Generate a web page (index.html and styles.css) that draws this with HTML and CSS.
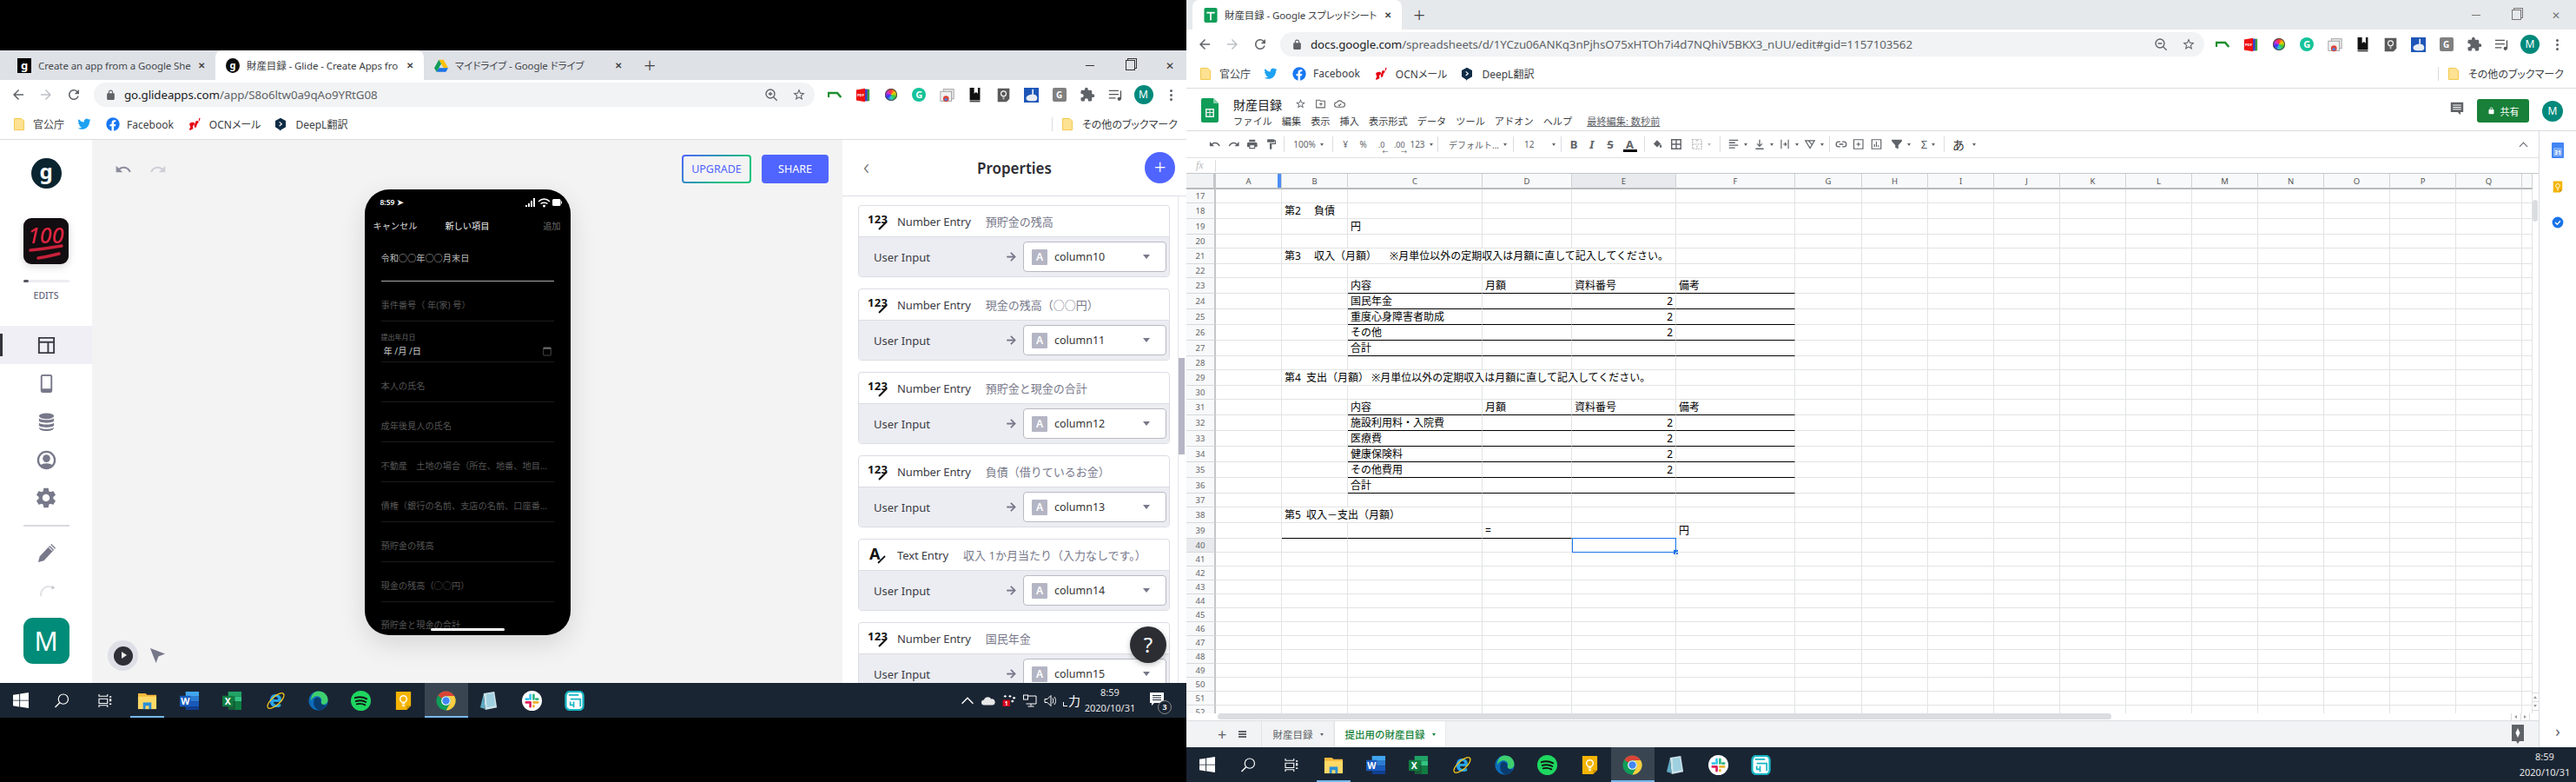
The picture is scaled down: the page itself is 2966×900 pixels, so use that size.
FILE: index.html
```html
<!DOCTYPE html>
<html lang="ja">
<head>
<meta charset="utf-8">
<title>Desktop</title>
<link rel="stylesheet" href="styles.css">
</head>
<body>
<svg class="defs" xmlns="http://www.w3.org/2000/svg">
  <symbol id="back" viewBox="0 0 24 24"><path d="M20 11H7.830l5.590-5.590L12 4l-8 8 8 8 1.410-1.410L7.830 13H20v-2z"/></symbol>
  <symbol id="reload" viewBox="0 0 24 24"><path d="M17.650 6.350A7.960 7.960 0 0 0 12 4c-4.420 0-7.990 3.580-7.990 8s3.570 8 7.990 8c3.730 0 6.840-2.550 7.730-6h-2.080A5.990 5.990 0 0 1 12 18c-3.310 0-6-2.690-6-6s2.690-6 6-6c1.660 0 3.140.69 4.220 1.780L13 11h7V4l-2.350 2.350z"/></symbol>
  <symbol id="lock" viewBox="0 0 24 24"><path d="M18 8h-1V6c0-2.760-2.240-5-5-5S7 3.240 7 6v2H6c-1.100 0-2 .9-2 2v10c0 1.100.9 2 2 2h12c1.100 0 2-.9 2-2V10c0-1.100-.9-2-2-2zM9 6c0-1.660 1.340-3 3-3s3 1.340 3 3v2H9V6z"/></symbol>
  <symbol id="star" viewBox="0 0 24 24"><path d="M22 9.240l-7.190-.62L12 2 9.190 8.630 2 9.240l5.460 4.730L5.820 21 12 17.270 18.180 21l-1.630-7.030L22 9.240zM12 15.400l-3.760 2.270 1-4.280-3.320-2.880 4.380-.38L12 6.100l1.710 4.040 4.380.38-3.320 2.880 1 4.280L12 15.400z"/></symbol>
  <symbol id="zoomi" viewBox="0 0 24 24"><circle cx="10.500" cy="10.500" r="7.500" fill="none" stroke="currentColor" stroke-width="2"/><path d="M16 16l6 6M7 10.500h7" stroke="currentColor" stroke-width="2"/><path d="M10.500 7v7" stroke="currentColor" stroke-width="2"/></symbol>
  <symbol id="zoomo" viewBox="0 0 24 24"><circle cx="10.500" cy="10.500" r="7.500" fill="none" stroke="currentColor" stroke-width="2"/><path d="M16 16l6 6M7 10.500h7" stroke="currentColor" stroke-width="2"/></symbol>
  <symbol id="folder" viewBox="0 0 12 14"><path d="M.5.500h8l3 2.500v10.500H.5z" fill="#fde293" stroke="#f2c94c"/></symbol>
  <symbol id="twitter" viewBox="0 0 24 24"><path fill="#1da1f2" d="M23 4.600c-.8.400-1.700.600-2.600.700.900-.600 1.600-1.400 2-2.500-.9.500-1.800.900-2.900 1.100A4.600 4.600 0 0 0 11.700 8.100 13 13 0 0 1 2.300 3.300a4.600 4.600 0 0 0 1.400 6.100c-.7 0-1.400-.2-2-.6v.1c0 2.200 1.600 4.100 3.700 4.500-.7.2-1.400.2-2.100.1.600 1.800 2.300 3.200 4.300 3.200A9.200 9.200 0 0 1 1 18.600 13 13 0 0 0 8 20.700c8.400 0 13-7 13-13v-.6c.9-.6 1.700-1.400 2-2.500z"/></symbol>
  <symbol id="fb" viewBox="0 0 24 24"><circle cx="12" cy="12" r="11.500" fill="#1877f2"/><path fill="#fff" d="M16.500 15.500l.5-3.500h-3.300V9.800c0-1 .5-1.900 2-1.900H17V5c0 0-1.400-.2-2.700-.2-2.700 0-4.500 1.600-4.500 4.600V12h-3v3.500h3v8.300a12 12 0 0 0 3.900 0v-8.300z"/></symbol>
  <symbol id="ocn" viewBox="0 0 24 24"><path fill="#e60012" d="M4 10c3-2 7-2 8 0s-2 4-3 5 2 3 0 5-6 3-6 1 2-2 2-4-3-5-1-7zM14 7c2-2 5-1 5 1s-3 3-3 5-2 6-3 5-2-3-1-5 1-4 2-6zM20 1l2 1-2 5-1-1z"/></symbol>
  <symbol id="deepl" viewBox="0 0 24 24"><path fill="#0f2b46" d="M12 1l9 5v11l-9 5v2l-2-2.500L3 17V6z"/><path d="M10 8l4 3.500-4 3.500" fill="none" stroke="#fff" stroke-width="1.800"/></symbol>
  <symbol id="drive" viewBox="0 0 24 22"><path fill="#ffc107" d="M8 1h8l8 14h-8z"/><path fill="#1a73e8" d="M24 15l-4 7H4l4-7z"/><path fill="#0f9d58" d="M8 1l4 7-8 14-4-7z"/></symbol>
  <symbol id="sheets-fav" viewBox="0 0 16 18"><rect width="16" height="18" rx="2" fill="#0f9d58"/><path d="M3 5h10v2H9v8H7V7H3z" fill="#fff"/></symbol>
  <symbol id="sheets" viewBox="0 0 20 28"><path fill="#0f9d58" d="M2 0h12l6 6v20a2 2 0 0 1-2 2H2a2 2 0 0 1-2-2V2a2 2 0 0 1 2-2z"/><path fill="#87ceac" d="M14 0l6 6h-6z"/><path fill="#f1f1f1" d="M5 12h10v10H5zm1.500 1.500v2.500h3v-2.500zm4 0v2.500h3v-2.500zm-4 3.500v3.500h3V17zm4 0v3.500h3V17z" fill-rule="evenodd"/></symbol>
  <symbol id="win" viewBox="0 0 20 20"><path fill="#fff" d="M0 3l8-1.100v7.700H0zM9 1.700L20 0v9.600H9zM0 10.500h8v7.700L0 17zM9 10.500h11V20L9 18.400z"/></symbol>
  <symbol id="search" viewBox="0 0 24 24"><circle cx="14.500" cy="9.500" r="7.500" fill="none" stroke="#fff" stroke-width="1.600"/><path d="M9 15l-7 7" stroke="#fff" stroke-width="1.800"/></symbol>
  <symbol id="taskview" viewBox="0 0 24 24"><path fill="none" stroke="#fff" stroke-width="1.500" d="M4 2v3h13V2M4 9h13v7H4zM4 22v-3h13v3"/><path fill="#fff" d="M20 5h3v2h-3zM20 9h3v4h-3zM20 16h3v2h-3z"/></symbol>
  <symbol id="explorer" viewBox="0 0 24 24"><path fill="#f5b83d" d="M1 3h9l2 2h11v17H1z"/><path fill="#ffd966" d="M1 7h22v15H1z"/><path fill="#2b8fd8" d="M7 14h10v8H7z"/><path fill="#ffd966" d="M10 18h4v4h-4z"/></symbol>
  <symbol id="word" viewBox="0 0 24 24"><path fill="#41a5ee" d="M7 1h16v6H7z"/><path fill="#2b7cd3" d="M7 7h16v6H7z"/><path fill="#185abd" d="M7 13h16v6H7z"/><path fill="#103f91" d="M7 19h16v4H7z"/><rect y="6" width="13" height="13" fill="#185abd"/><text x="6.500" y="16.500" text-anchor="middle" class="svgb" fill="#fff" font-size="11">W</text></symbol>
  <symbol id="excel" viewBox="0 0 24 24"><path fill="#21a366" d="M7 1h16v6H7z"/><path fill="#107c41" d="M7 7h8v6H7z"/><path fill="#33c481" d="M15 7h8v6h-8z"/><path fill="#185c37" d="M7 13h8v10H7z"/><path fill="#107c41" d="M15 13h8v10h-8z"/><rect y="6" width="13" height="13" fill="#107c41"/><text x="6.500" y="16.500" text-anchor="middle" class="svgb" fill="#fff" font-size="11">X</text></symbol>
  <symbol id="ie" viewBox="0 0 24 24"><text x="12" y="20" text-anchor="middle" class="svgb" fill="#2aa6e8" font-size="27">e</text><ellipse cx="12" cy="12" rx="12.500" ry="5" transform="rotate(-42 12 12)" fill="none" stroke="#f5c518" stroke-width="1.300"/></symbol>
  <symbol id="edge" viewBox="0 0 24 24"><circle cx="12" cy="12" r="11.500" fill="#0c6bb8"/><path fill="#3ed06e" d="M12 .5C19 .5 23.500 5.500 23.500 11c0 4-3 5.500-5.500 5.500s-3-1-3-2 1-1.500 1-3c0-3-3.500-6-8-4.500C6 7.800 4 9.500 3 12 3 5 7 .5 12 .5z"/><path fill="#0a3c6e" d="M8 9c3-2 7 0 7 3 0 5 4 6 7 5-2 4-6 6.500-10 6C10 22 6 19 6.500 14 6.800 12 7 10 8 9z"/></symbol>
  <symbol id="spotify" viewBox="0 0 24 24"><circle cx="12" cy="12" r="12" fill="#1ed760"/><path d="M5 8.500c5-1.500 10-1 14 1.200M6 12.500c4-1 9-.8 12 1.100M7 16c3-.7 7-.5 10 1" fill="none" stroke="#111" stroke-width="2" stroke-linecap="round"/></symbol>
  <symbol id="keep" viewBox="0 0 24 24"><path fill="#f4b400" d="M3 1h18v17l-5 5H3z"/><path fill="#c58f00" d="M16 18h5l-5 5z"/><circle cx="12" cy="10" r="4" fill="none" stroke="#fff" stroke-width="1.500"/><path d="M10 15.500h4M10.500 18h3" stroke="#fff" stroke-width="1.500"/></symbol>
  <symbol id="chrome" viewBox="0 0 24 24"><circle cx="12" cy="12" r="11.500" fill="#0f9d58"/><path fill="#db4437" d="M12 .5a11.500 11.500 0 0 1 10 5.750H12a5.750 5.750 0 0 0-5 2.900L2.400 5.700A11.500 11.500 0 0 1 12 .5z"/><path fill="#ffcd40" d="M22 6.250A11.500 11.500 0 0 1 12 23.500l5-8.600a5.750 5.750 0 0 0-5-8.650z"/><circle cx="12" cy="12" r="5.600" fill="#fff"/><circle cx="12" cy="12" r="4.400" fill="#4285f4"/></symbol>
  <symbol id="notepad" viewBox="0 0 24 24"><path fill="#cfe3ea" d="M5 3l13-2 3 19-14 3z"/><path fill="#5fa8c0" d="M1 20L5 4l2 18z"/><path fill="#9fd0e0" d="M8 4l9-1 2 15-10 2z"/></symbol>
  <symbol id="slack" viewBox="0 0 24 24"><circle cx="12" cy="12" r="12" fill="#fff"/><path d="M10 5v5" stroke="#36c5f0" stroke-width="2.800" stroke-linecap="round"/><path d="M5 10h2.500" stroke="#36c5f0" stroke-width="2.800" stroke-linecap="round"/><path d="M14 5v5" stroke="#2eb67d" stroke-width="2.800" stroke-linecap="round"/><path d="M17 10h2" stroke="#2eb67d" stroke-width="2.800" stroke-linecap="round"/><path d="M14 14h5M14 19v-1" stroke="#ecb22e" stroke-width="2.800" stroke-linecap="round"/><path d="M5 14h5M10 14v5" stroke="#e01e5a" stroke-width="2.800" stroke-linecap="round"/></symbol>
  <symbol id="teal" viewBox="0 0 24 24"><rect x="1.500" y="1" width="21" height="22" rx="5" fill="#fff" stroke="#17b6c4" stroke-width="2.400"/><path d="M5 5h12M7 10h12v9M11 13v7M7 13v4h4" fill="none" stroke="#17b6c4" stroke-width="1.800"/></symbol>
  <symbol id="puzzle" viewBox="0 0 24 24"><path d="M20.500 11H19V7c0-1.100-.9-2-2-2h-4V3.500a2.500 2.500 0 0 0-5 0V5H4c-1.100 0-2 .9-2 2v3.800h1.500c1.500 0 2.700 1.200 2.700 2.700S5 16.200 3.500 16.200H2V20c0 1.100.9 2 2 2h3.800v-1.500c0-1.500 1.200-2.700 2.700-2.700s2.700 1.200 2.700 2.700V22H17c1.100 0 2-.9 2-2v-4h1.500a2.500 2.500 0 0 0 0-5z"/></symbol>
  <symbol id="gear" viewBox="0 0 24 24"><path d="M19.140 12.940c.04-.3.060-.61.060-.94 0-.32-.02-.64-.07-.94l2.030-1.580a.49.49 0 0 0 .12-.61l-1.920-3.320a.488.488 0 0 0-.59-.22l-2.390.96c-.5-.38-1.030-.7-1.620-.94l-.36-2.540a.484.484 0 0 0-.48-.41h-3.840c-.24 0-.43.17-.47.41l-.36 2.540c-.59.24-1.130.57-1.620.94l-2.390-.96c-.22-.08-.47 0-.59.22L2.740 8.870c-.12.21-.08.47.12.61l2.030 1.580c-.05.3-.09.63-.09.94s.02.64.07.94l-2.030 1.580a.49.49 0 0 0-.12.61l1.920 3.320c.12.22.37.29.59.22l2.390-.96c.5.38 1.030.7 1.620.94l.36 2.540c.05.24.24.41.48.41h3.840c.24 0 .44-.17.47-.41l.36-2.540c.59-.24 1.130-.56 1.620-.94l2.390.96c.22.08.47 0 .59-.22l1.920-3.320c.12-.22.07-.47-.12-.61l-2.010-1.580zM12 15.600c-1.980 0-3.600-1.620-3.600-3.600s1.620-3.600 3.600-3.600 3.600 1.620 3.600 3.600-1.620 3.600-3.600 3.600z"/></symbol>
  <symbol id="undo" viewBox="0 0 24 24"><path d="M12.500 8c-2.650 0-5.050.99-6.900 2.600L2 7v9h9l-3.620-3.620c1.390-1.160 3.160-1.880 5.120-1.880 3.540 0 6.550 2.310 7.600 5.500l2.370-.78C21.080 11.030 17.150 8 12.500 8z"/></symbol>
  <symbol id="redo" viewBox="0 0 24 24"><path transform="matrix(-1 0 0 1 24 0)" d="M12.500 8c-2.650 0-5.050.99-6.900 2.600L2 7v9h9l-3.620-3.620c1.390-1.160 3.160-1.880 5.120-1.880 3.540 0 6.550 2.310 7.600 5.500l2.370-.78C21.080 11.030 17.150 8 12.500 8z"/></symbol>
  <symbol id="print" viewBox="0 0 24 24"><path d="M19 8H5c-1.660 0-3 1.340-3 3v6h4v4h12v-4h4v-6c0-1.660-1.340-3-3-3zm-3 11H8v-5h8v5zm-1-16H6v4h12V3z"/></symbol>
  <symbol id="paint" viewBox="0 0 24 24"><path d="M18 4V3c0-.55-.45-1-1-1H5c-.55 0-1 .45-1 1v4c0 .55.45 1 1 1h12c.55 0 1-.45 1-1V6h1v4H9v11c0 .55.45 1 1 1h2c.55 0 1-.45 1-1v-9h8V4h-3z"/></symbol>
  <symbol id="n123" viewBox="0 0 24 20"><text x="0" y="12" class="svgb" font-size="13" fill="#111" textLength="23">123</text><path d="M13 19l9-9" stroke="#111" stroke-width="2"/></symbol>
  <symbol id="atext" viewBox="0 0 24 20"><text x="2" y="15" class="svgb" font-size="18" fill="#111">A</text><path d="M12 19l8-8" stroke="#111" stroke-width="1.800"/></symbol>
  <symbol id="calendar" viewBox="0 0 14 16"><rect x="1" y="2.500" width="12" height="12.500" rx="1" fill="none" stroke="#666" stroke-width="1"/><path d="M1 2h12v3H1z" fill="#666"/></symbol>
</svg>

<section class="window left">
  <div class="tabstrip">
    <div class="tab"><span class="fav fav-g">g</span><span class="tab-t">Create an app from a Google She</span><span class="tab-x">✕</span></div>
    <div class="tab active"><span class="fav fav-gc">g</span><span class="tab-t">財産目録 - Glide - Create Apps fro</span><span class="tab-x">✕</span></div>
    <div class="tab last"><svg class="fav"><use href="#drive"/></svg><span class="tab-t">マイドライブ - Google ドライブ</span><span class="tab-x">✕</span></div>
    <span class="newtab">+</span>
    <div class="winctl"><span class="min"></span><span class="res"></span><span class="cls">✕</span></div>
  </div>
  <div class="toolbar">
    <svg class="nav"><use href="#back"/></svg>
    <svg class="nav off"><use href="#back"/></svg>
    <svg class="nav"><use href="#reload"/></svg>
    <div class="addr">
      <svg class="lock"><use href="#lock"/></svg>
      <span class="url"><b>go.glideapps.com</b>/app/S8o6ltw0a9qAo9YRtG08</span>
      <svg class="aico"><use href="#zoomi"/></svg>
      <svg class="aico"><use href="#star"/></svg>
    </div>
    <span class="ext"><svg class="ex" viewBox="0 0 20 10"><path d="M1 8V2h12l5 6" fill="none" stroke="#1e8e2e" stroke-width="3"/></svg></span>
    <span class="ext"><svg class="ex" viewBox="0 0 20 20"><rect x="14" y="2" width="5" height="16" fill="#3f9a3f"/><rect x="11" y="2" width="5" height="16" fill="#3b3fd0"/><path d="M1 3l12-2v18L1 17z" fill="#ee1111"/><text x="7" y="12" text-anchor="middle" class="svgb" font-size="5" fill="#fff">PDF</text></svg></span>
    <span class="ext"><span class="wheel"></span></span>
    <span class="ext"><span class="gram">G</span></span>
    <span class="ext"><svg class="ex" viewBox="0 0 20 20"><rect x="5" y="2" width="14" height="13" fill="#e8e8e8" stroke="#999"/><rect x="1" y="5" width="15" height="13" fill="#f1f1f1" stroke="#999"/><circle cx="8.500" cy="15" r="4" fill="#db4437"/><circle cx="8.500" cy="16" r="2" fill="#4285f4"/></svg></span>
    <span class="ext"><svg class="ex" viewBox="0 0 20 20"><path d="M3 0h14v17H3z" fill="#111"/><path d="M9 0h5v8l-2.500-2L9 8z" fill="#fff"/><path d="M3 18.500h14" stroke="#333" stroke-width="1.500"/></svg></span>
    <span class="ext"><svg class="ex" viewBox="0 0 20 20"><path d="M2 1h16v14l-4 4H2z" fill="#5a5a5a"/><circle cx="10" cy="8" r="3.500" fill="none" stroke="#fff" stroke-width="1.300"/><path d="M8.500 13h3M9 15h2" stroke="#fff"/></svg></span>
    <span class="ext"><svg class="ex" viewBox="0 0 20 20"><rect width="20" height="20" fill="#1d56b8"/><path d="M3 14c0-3 4-5 8-5l0-7h2v7c3 0 5 2 5 5s-2 4-7 4-8-1-8-4z" fill="#e9eef5"/></svg></span>
    <span class="ext"><span class="gsq">G</span></span>
    <span class="ext"><svg class="ex dark"><use href="#puzzle"/></svg></span>
    <span class="ext"><svg class="ex" viewBox="0 0 20 20"><path d="M1 4h13M1 9h13M1 14h9" stroke="#555" stroke-width="1.600"/><path d="M17 4v11" stroke="#555" stroke-width="1.600"/><circle cx="15" cy="15" r="2.500" fill="#555"/></svg></span>
    <span class="ext"><span class="ava">M</span></span>
    <span class="ext"><span class="dots"></span></span>
  </div>
  <div class="bookmarks">
    <svg class="bm-f"><use href="#folder"/></svg><span class="bm-t gap1">官公庁</span>
    <svg class="bm-i tw"><use href="#twitter"/></svg>
    <svg class="bm-i fbk"><use href="#fb"/></svg><span class="bm-t">Facebook</span>
    <svg class="bm-i oc"><use href="#ocn"/></svg><span class="bm-t">OCNメール</span>
    <svg class="bm-i dl"><use href="#deepl"/></svg><span class="bm-t">DeepL翻訳</span>
    <span class="bm-other"><svg class="bm-f"><use href="#folder"/></svg><span class="bm-t">その他のブックマーク</span></span>
  </div>
  <div class="app">
    <aside class="side">
      <span class="logo">g</span>
      <svg class="appicon" viewBox="0 0 52 53"><rect width="52" height="53" rx="9" fill="#120d10"/><text x="26" y="29" text-anchor="middle" class="svgi" font-size="25" fill="#e0243f">100</text><path d="M8 37c12-1 24-3 36-5" stroke="#c8213a" stroke-width="3.500" stroke-linecap="round"/><path d="M17 46c8-1 16-3 24-5" stroke="#c8213a" stroke-width="3.500" stroke-linecap="round"/></svg>
      <span class="edits-bar"><i></i></span>
      <span class="edits">EDITS</span>
      <span class="srow sel"><svg class="sic" viewBox="0 0 24 24"><path d="M3 3h18v18H3zM3 8h18M14 8v13" fill="none" stroke="#3a3b44" stroke-width="2"/></svg></span>
      <span class="srow"><svg class="sic" viewBox="0 0 24 24"><rect x="5" y="1" width="14" height="22" rx="2.500" fill="#77788a"/><rect x="7" y="3" width="10" height="15" fill="#fff"/></svg></span>
      <span class="srow"><svg class="sic" viewBox="0 0 24 24" fill="#77788a"><ellipse cx="12" cy="5" rx="9" ry="3.500"/><path d="M3 7.500c2 3 16 3 18 0V11c-2 3-16 3-18 0zM3 13c2 3 16 3 18 0v3.500c-2 3-16 3-18 0zM3 18.500c2 3 16 3 18 0 0 3-4 4.500-9 4.500s-9-1.500-9-4.500z"/></svg></span>
      <span class="srow"><svg class="sic" viewBox="0 0 24 24"><circle cx="12" cy="12" r="10" fill="#fff" stroke="#77788a" stroke-width="2.400"/><circle cx="12" cy="10" r="4.500" fill="#77788a"/><path d="M4.500 19c2-4 13-4 15 0a10 10 0 0 1-15 0z" fill="#77788a"/></svg></span>
      <span class="srow"><svg class="sic gearc"><use href="#gear"/></svg></span>
      <span class="sdiv"></span>
      <span class="srow"><svg class="sic" viewBox="0 0 24 24"><path d="M2 23l2-7L16 3l5 5L9 21z" fill="#77788a"/><path d="M17 2l1-1 5 5-1 1z" fill="#77788a"/><path d="M15 5l4 4" stroke="#fff" stroke-width="1.200"/></svg></span>
      <span class="srow low"><svg class="sic" viewBox="0 0 24 24"><path d="M5 20C5 10 13 6 20 10" fill="none" stroke="#e2e2e6" stroke-width="2"/><path d="M19 7l3 3-4 2z" fill="#c4c4cc"/></svg></span>
      <span class="mbox">M</span>
    </aside>
    <main class="canvas">
      <div class="canvas-top">
        <svg class="cv-u"><use href="#undo"/></svg>
        <svg class="cv-r"><use href="#redo"/></svg>
        <span class="upgrade"><span>UPGRADE</span></span>
        <span class="share">SHARE</span>
      </div>
      <div class="phone">
        <div class="status"><span class="clock">8:59 ➤</span>
          <svg class="st-ico" viewBox="0 0 42 12"><path fill="#fff" d="M0 9h2v2H0zM3 7h2v4H3zM6 4h2v7H6zM9 1h2v10H9z"/><path d="M15 5c4-4 9-4 13 0M17.500 7.500c3-2 5-2 8 0" fill="none" stroke="#fff" stroke-width="1.500"/><circle cx="21.500" cy="10" r="1.500" fill="#fff"/><rect x="31" y="2" width="9.500" height="8" rx="1.500" fill="#fff"/><rect x="41" y="4.500" width="1" height="3" fill="#fff"/></svg>
        </div>
        <div class="pnav"><span>キャンセル</span><span class="ptitle">新しい項目</span><span class="padd">追加</span></div>
        <div class="field first">令和○○年○○月末日</div>
        <div class="field">事件番号（ 年(家) 号）</div>
        <div class="field datef"><small>提出年月日</small><span class="dval"><span>年 /月 /日</span><svg class="cal"><use href="#calendar"/></svg></span></div>
        <div class="field">本人の氏名</div>
        <div class="field">成年後見人の氏名</div>
        <div class="field">不動産　土地の場合（所在、地番、地目、地積）</div>
        <div class="field">債権（銀行の名前、支店の名前、口座番号、金額）</div>
        <div class="field">預貯金の残高</div>
        <div class="field">現金の残高（○○円）</div>
        <div class="field nob">預貯金と現金の合計</div>
        <span class="home"></span>
      </div>
      <div class="player"><span class="play"><i></i></span><svg class="cursor" viewBox="0 0 20 20"><path d="M1 1l18 7-8 3-3 8z" fill="#77778a"/></svg></div>
    </main>
    <aside class="props">
      <header class="props-h"><span class="chev">‹</span><h1>Properties</h1><span class="addb">+</span></header>
      <div class="cards">
        <article class="card"><div class="c-h"><svg class="c-i"><use href="#n123"/></svg><span class="c-n">Number Entry</span><span class="c-s">預貯金の残高</span></div><div class="c-b"><span class="c-l">User Input</span><svg class="c-a"><use href="#back"/></svg><span class="sel-box"><span class="sa">A</span><span class="sn">column10</span><i></i></span></div></article>
        <article class="card"><div class="c-h"><svg class="c-i"><use href="#n123"/></svg><span class="c-n">Number Entry</span><span class="c-s">現金の残高（○○円）</span></div><div class="c-b"><span class="c-l">User Input</span><svg class="c-a"><use href="#back"/></svg><span class="sel-box"><span class="sa">A</span><span class="sn">column11</span><i></i></span></div></article>
        <article class="card"><div class="c-h"><svg class="c-i"><use href="#n123"/></svg><span class="c-n">Number Entry</span><span class="c-s">預貯金と現金の合計</span></div><div class="c-b"><span class="c-l">User Input</span><svg class="c-a"><use href="#back"/></svg><span class="sel-box"><span class="sa">A</span><span class="sn">column12</span><i></i></span></div></article>
        <article class="card"><div class="c-h"><svg class="c-i"><use href="#n123"/></svg><span class="c-n">Number Entry</span><span class="c-s">負債（借りているお金）</span></div><div class="c-b"><span class="c-l">User Input</span><svg class="c-a"><use href="#back"/></svg><span class="sel-box"><span class="sa">A</span><span class="sn">column13</span><i></i></span></div></article>
        <article class="card"><div class="c-h"><svg class="c-i"><use href="#atext"/></svg><span class="c-n">Text Entry</span><span class="c-s">収入 1か月当たり（入力なしです。）</span></div><div class="c-b"><span class="c-l">User Input</span><svg class="c-a"><use href="#back"/></svg><span class="sel-box"><span class="sa">A</span><span class="sn">column14</span><i></i></span></div></article>
        <article class="card"><div class="c-h"><svg class="c-i"><use href="#n123"/></svg><span class="c-n">Number Entry</span><span class="c-s">国民年金</span></div><div class="c-b"><span class="c-l">User Input</span><svg class="c-a"><use href="#back"/></svg><span class="sel-box"><span class="sa">A</span><span class="sn">column15</span><i></i></span></div></article>
      </div>
      <span class="p-thumb"></span>
      <span class="help">?</span>
    </aside>
  </div>
  <footer class="taskbar">
    <span class="tk s1"><svg><use href="#win"/></svg></span>
    <span class="tk s2"><svg><use href="#search"/></svg></span>
    <span class="tk s3"><svg><use href="#taskview"/></svg></span>
    <span class="tk on"><svg><use href="#explorer"/></svg></span>
    <span class="tk"><svg><use href="#word"/></svg></span>
    <span class="tk"><svg><use href="#excel"/></svg></span>
    <span class="tk"><svg><use href="#ie"/></svg></span>
    <span class="tk"><svg><use href="#edge"/></svg></span>
    <span class="tk"><svg><use href="#spotify"/></svg></span>
    <span class="tk"><svg><use href="#keep"/></svg></span>
    <span class="tk act"><svg><use href="#chrome"/></svg></span>
    <span class="tk"><svg><use href="#notepad"/></svg></span>
    <span class="tk"><svg><use href="#slack"/></svg></span>
    <span class="tk"><svg><use href="#teal"/></svg></span>
    <div class="tray">
      <span class="tr"><svg viewBox="0 0 14 14"><path d="M1 10l6-6 6 6" fill="none" stroke="#fff" stroke-width="1.300"/></svg></span>
      <span class="tr"><svg viewBox="0 0 16 14"><path d="M3 12a3 3 0 0 1 0-6c1-4 7-4 8-1a3.500 3.500 0 0 1 2 7z" fill="#e8e8e8"/></svg></span>
      <span class="tr"><svg viewBox="0 0 16 16"><path fill="#fff" d="M3 1l2 1.500L3 4 1 2.500zM9 1l2 1.500L9 4 7 2.500zM14 3l2 1.500-2 1.500-2-1.500zM12 7l2 1.500-2 1.500-2-1.500z"/><rect y="7" width="9" height="8" rx="1" fill="#d9001b"/><text x="4.500" y="14" text-anchor="middle" class="svgb" font-size="7" fill="#fff">1</text></svg></span>
      <span class="tr"><svg viewBox="0 0 16 14"><path d="M3.500 1.500H15v9H3.500M9 10.500v2.500M5.500 13.500h7" fill="none" stroke="#fff"/><rect x=".5" y=".5" width="5" height="5" fill="#1a2533" stroke="#fff"/></svg></span>
      <span class="tr"><svg viewBox="0 0 16 14"><path d="M1 5h3l4-4v12L4 9H1z" fill="none" stroke="#fff"/><path d="M10 4c1 2 1 4 0 6M12 2.500c2 3 2 6 0 9" fill="none" stroke="#fff"/></svg></span>
      <span class="tr ime"><i></i>力</span>
      <span class="tclock"><span>8:59</span><span>2020/10/31</span></span>
      <span class="notif"><svg viewBox="0 0 16 15"><path d="M0 0h16v12H5l-3 3v-3H0z" fill="#fff"/><path d="M3 3.500h10M3 6h10M3 8.500h10" stroke="#1a2533"/></svg><b>3</b></span>
    </div>
  </footer>
</section>

<section class="window right">
  <div class="tabstrip">
    <div class="tab active wide"><svg class="fav"><use href="#sheets-fav"/></svg><span class="tab-t">財産目録 - Google スプレッドシート</span><span class="tab-x">✕</span></div>
    <span class="newtab">+</span>
    <div class="winctl"><span class="min"></span><span class="res"></span><span class="cls">✕</span></div>
  </div>
  <div class="toolbar">
    <svg class="nav"><use href="#back"/></svg>
    <svg class="nav off"><use href="#back"/></svg>
    <svg class="nav"><use href="#reload"/></svg>
    <div class="addr">
      <svg class="lock"><use href="#lock"/></svg>
      <span class="url"><b>docs.google.com</b>/spreadsheets/d/1YCzu06ANKq3nPjhsO75xHTOh7i4d7NQhiV5BKX3_nUU/edit#gid=1157103562</span>
      <svg class="aico"><use href="#zoomo"/></svg>
      <svg class="aico"><use href="#star"/></svg>
    </div>
    <span class="ext"><svg class="ex" viewBox="0 0 20 10"><path d="M1 8V2h12l5 6" fill="none" stroke="#1e8e2e" stroke-width="3"/></svg></span>
    <span class="ext"><svg class="ex" viewBox="0 0 20 20"><rect x="14" y="2" width="5" height="16" fill="#3f9a3f"/><rect x="11" y="2" width="5" height="16" fill="#3b3fd0"/><path d="M1 3l12-2v18L1 17z" fill="#ee1111"/><text x="7" y="12" text-anchor="middle" class="svgb" font-size="5" fill="#fff">PDF</text></svg></span>
    <span class="ext"><span class="wheel"></span></span>
    <span class="ext"><span class="gram">G</span></span>
    <span class="ext"><svg class="ex" viewBox="0 0 20 20"><rect x="5" y="2" width="14" height="13" fill="#e8e8e8" stroke="#999"/><rect x="1" y="5" width="15" height="13" fill="#f1f1f1" stroke="#999"/><circle cx="8.500" cy="15" r="4" fill="#db4437"/><circle cx="8.500" cy="16" r="2" fill="#4285f4"/></svg></span>
    <span class="ext"><svg class="ex" viewBox="0 0 20 20"><path d="M3 0h14v17H3z" fill="#111"/><path d="M9 0h5v8l-2.500-2L9 8z" fill="#fff"/><path d="M3 18.500h14" stroke="#333" stroke-width="1.500"/></svg></span>
    <span class="ext"><svg class="ex" viewBox="0 0 20 20"><path d="M2 1h16v14l-4 4H2z" fill="#5a5a5a"/><circle cx="10" cy="8" r="3.500" fill="none" stroke="#fff" stroke-width="1.300"/><path d="M8.500 13h3M9 15h2" stroke="#fff"/></svg></span>
    <span class="ext"><svg class="ex" viewBox="0 0 20 20"><rect width="20" height="20" fill="#1d56b8"/><path d="M3 14c0-3 4-5 8-5l0-7h2v7c3 0 5 2 5 5s-2 4-7 4-8-1-8-4z" fill="#e9eef5"/></svg></span>
    <span class="ext"><span class="gsq">G</span></span>
    <span class="ext"><svg class="ex dark"><use href="#puzzle"/></svg></span>
    <span class="ext"><svg class="ex" viewBox="0 0 20 20"><path d="M1 4h13M1 9h13M1 14h9" stroke="#555" stroke-width="1.600"/><path d="M17 4v11" stroke="#555" stroke-width="1.600"/><circle cx="15" cy="15" r="2.500" fill="#555"/></svg></span>
    <span class="ext"><span class="ava">M</span></span>
    <span class="ext"><span class="dots"></span></span>
  </div>
  <div class="bookmarks">
    <svg class="bm-f"><use href="#folder"/></svg><span class="bm-t gap1">官公庁</span>
    <svg class="bm-i tw"><use href="#twitter"/></svg>
    <svg class="bm-i fbk"><use href="#fb"/></svg><span class="bm-t">Facebook</span>
    <svg class="bm-i oc"><use href="#ocn"/></svg><span class="bm-t">OCNメール</span>
    <svg class="bm-i dl"><use href="#deepl"/></svg><span class="bm-t">DeepL翻訳</span>
    <span class="bm-other"><svg class="bm-f"><use href="#folder"/></svg><span class="bm-t">その他のブックマーク</span></span>
  </div>
  <header class="sh-head">
    <svg class="sh-logo"><use href="#sheets"/></svg>
    <div class="sh-titles">
      <div class="sh-title"><span class="sh-name">財産目録</span>
        <svg class="sh-ti" viewBox="0 0 24 24"><use href="#star"/></svg>
        <svg class="sh-ti" viewBox="0 0 24 24"><path d="M3 4h7l2 2h9v14H3z" fill="none" stroke="#666" stroke-width="2"/><path d="M13 9v7M9 12.500h7" stroke="#666" stroke-width="2"/></svg>
        <svg class="sh-ti" viewBox="0 0 24 24"><path d="M6 19a5 5 0 0 1 0-10c2-5 10-5 12 0a5 5 0 0 1 0 10z" fill="none" stroke="#666" stroke-width="2"/><path d="M9 14l2 2 4-4" fill="none" stroke="#666" stroke-width="2"/></svg>
      </div>
      <nav class="sh-menu"><span>ファイル</span><span>編集</span><span>表示</span><span>挿入</span><span>表示形式</span><span>データ</span><span>ツール</span><span>アドオン</span><span>ヘルプ</span><span class="saved">最終編集: 数秒前</span></nav>
    </div>
    <svg class="sh-cmt" viewBox="0 0 20 20"><path d="M1 1h18v14h-4v4l-4-4H1z" fill="#5f6368"/><path d="M4 5h12M4 8h12M4 11h12" stroke="#fff" stroke-width="1.300"/></svg>
    <span class="sh-share"><svg viewBox="0 0 24 24"><use href="#lock"/></svg>共有</span>
    <span class="sh-ava">M</span>
  </header>
  <div class="sh-body">
    <div class="sh-main">
      <div class="sh-tools">
        <svg class="tic w22"><use href="#undo"/></svg><svg class="tic w22"><use href="#redo"/></svg><svg class="tic w22"><use href="#print"/></svg><svg class="tic w22"><use href="#paint"/></svg><span class="sp"></span>
        <span class="ti dd w47">100%<i></i></span><span class="sp"></span>
        <span class="ti w20">¥</span><span class="ti w22">%</span><span class="ti w20 sm">.0<sub>←</sub></span><span class="ti w22 sm">.00<sub>→</sub></span><span class="ti dd w29">123<i></i></span><span class="sp"></span>
        <span class="ti dd w78 lft">デフォルト...<i></i></span><span class="sp"></span>
        <span class="ti dd w46 twelve">12<i></i></span><span class="sp"></span>
        <b class="ti w20 big">B</b><em class="ti w22 big">I</em><s class="ti w21 big">S</s><span class="ti w24 big acol">A</span><span class="sp"></span>
        <svg class="tic w20" viewBox="0 0 24 24"><path d="M5 11l7-7 7 7-7 7zM21 16c0 2-1 3-2 3s-2-1-2-3 2-4 2-4 2 2 2 4z" fill="#5f6368"/></svg>
        <svg class="tic w24" viewBox="0 0 24 24"><path d="M3 3h18v18H3zM12 3v18M3 12h18" fill="none" stroke="#5f6368" stroke-width="2.400"/></svg>
        <span class="ti dd w34 faint"><svg class="tic w14" viewBox="0 0 24 24"><path d="M3 3h18v18H3zM12 3v6M12 15v6M3 12h18" fill="none" stroke="#aaa" stroke-width="2" stroke-dasharray="3 2"/></svg><i></i></span><span class="sp"></span>
        <span class="ti dd w32"><svg class="tic w14" viewBox="0 0 24 24"><path d="M3 4h18M3 9h12M3 14h18M3 19h12" stroke="#5f6368" stroke-width="2.400"/></svg><i></i></span>
        <span class="ti dd w28"><svg class="tic w14" viewBox="0 0 24 24"><path d="M4 21h16M12 3v12M7 11l5 5 5-5" stroke="#5f6368" stroke-width="2.200" fill="none"/></svg><i></i></span>
        <span class="ti dd w30"><svg class="tic w14" viewBox="0 0 24 24"><path d="M5 3v18M19 3v18M9 12h6M12 9l3 3-3 3" stroke="#5f6368" stroke-width="2" fill="none"/></svg><i></i></span>
        <span class="ti dd w27"><svg class="tic w14" viewBox="0 0 24 24"><path d="M3 5h18L12 20zM9 5l8 9" stroke="#5f6368" stroke-width="2" fill="none"/></svg><i></i></span><span class="sp"></span>
        <svg class="tic w18" viewBox="0 0 24 24"><path d="M10 7H7a5 5 0 0 0 0 10h3M14 7h3a5 5 0 0 1 0 10h-3M8 12h8" stroke="#5f6368" stroke-width="2.200" fill="none"/></svg>
        <svg class="tic w22" viewBox="0 0 24 24"><path d="M3 3h18v18H3zM12 8v8M8 12h8" stroke="#5f6368" stroke-width="2" fill="none"/></svg>
        <svg class="tic w21" viewBox="0 0 24 24"><path d="M3 3h18v18H3zM8 17v-5M12 17V7M16 17v-3" stroke="#5f6368" stroke-width="2" fill="none"/></svg>
        <span class="ti dd w35"><svg class="tic w14" viewBox="0 0 24 24"><path d="M2 3h20v3l-7 8v7l-6-2v-5L2 6z" fill="#5f6368"/></svg><i></i></span>
        <span class="ti dd w28 big sig">Σ<i></i></span><span class="sp"></span>
        <span class="ti dd w40 hira">あ<i></i></span>
        <span class="collapse"></span>
      </div>
      <div class="sh-fx"><span class="fx">fx</span></div>
      <div class="grid-wrap">
        <table class="grid">
          <colgroup><col class="c0"><col class="c76"><col class="c76"><col class="c155"><col class="c103"><col class="c120"><col class="c137"><col class="c77"><col class="c76"><col class="c76"><col class="c76"><col class="c76"><col class="c76"><col class="c76"><col class="c76"><col class="c76"><col class="c76"><col class="c76"><col class="c12"></colgroup>
          <thead><tr class="hd"><th class="corner"></th><th class="freeze">A</th><th>B</th><th>C</th><th>D</th><th class="hl">E</th><th>F</th><th>G</th><th>H</th><th>I</th><th>J</th><th>K</th><th>L</th><th>M</th><th>N</th><th>O</th><th>P</th><th>Q</th><th></th></tr></thead>
          <tbody>
            <tr class="e"><th>17</th><td></td><td></td><td></td><td></td><td></td><td></td><td></td><td></td><td></td><td></td><td></td><td></td><td></td><td></td><td></td><td></td><td></td><td></td></tr>
            <tr><th>18</th><td></td><td>第2&nbsp;　負債</td><td></td><td></td><td></td><td></td><td></td><td></td><td></td><td></td><td></td><td></td><td></td><td></td><td></td><td></td><td></td><td></td></tr>
            <tr><th>19</th><td></td><td></td><td>円</td><td></td><td></td><td></td><td></td><td></td><td></td><td></td><td></td><td></td><td></td><td></td><td></td><td></td><td></td><td></td></tr>
            <tr class="e"><th>20</th><td></td><td></td><td></td><td></td><td></td><td></td><td></td><td></td><td></td><td></td><td></td><td></td><td></td><td></td><td></td><td></td><td></td><td></td></tr>
            <tr><th>21</th><td></td><td colspan="4">第3&nbsp;　収入（月額）&nbsp;　※月単位以外の定期収入は月額に直して記入してください。</td><td></td><td></td><td></td><td></td><td></td><td></td><td></td><td></td><td></td><td></td><td></td><td></td><td></td></tr>
            <tr class="e"><th>22</th><td></td><td></td><td></td><td></td><td></td><td></td><td></td><td></td><td></td><td></td><td></td><td></td><td></td><td></td><td></td><td></td><td></td><td></td></tr>
            <tr><th>23</th><td></td><td></td><td class="bk">内容</td><td class="bk">月額</td><td class="bk">資料番号</td><td class="bk">備考</td><td></td><td></td><td></td><td></td><td></td><td></td><td></td><td></td><td></td><td></td><td></td><td></td></tr>
            <tr><th>24</th><td></td><td></td><td class="bk">国民年金</td><td class="bk"></td><td class="bk num">2</td><td class="bk"></td><td></td><td></td><td></td><td></td><td></td><td></td><td></td><td></td><td></td><td></td><td></td><td></td></tr>
            <tr><th>25</th><td></td><td></td><td class="bk">重度心身障害者助成</td><td class="bk"></td><td class="bk num">2</td><td class="bk"></td><td></td><td></td><td></td><td></td><td></td><td></td><td></td><td></td><td></td><td></td><td></td><td></td></tr>
            <tr><th>26</th><td></td><td></td><td class="bk">その他</td><td class="bk"></td><td class="bk num">2</td><td class="bk"></td><td></td><td></td><td></td><td></td><td></td><td></td><td></td><td></td><td></td><td></td><td></td><td></td></tr>
            <tr><th>27</th><td></td><td></td><td class="bk">合計</td><td class="bk"></td><td class="bk"></td><td class="bk"></td><td></td><td></td><td></td><td></td><td></td><td></td><td></td><td></td><td></td><td></td><td></td><td></td></tr>
            <tr class="e"><th>28</th><td></td><td></td><td></td><td></td><td></td><td></td><td></td><td></td><td></td><td></td><td></td><td></td><td></td><td></td><td></td><td></td><td></td><td></td></tr>
            <tr><th>29</th><td></td><td colspan="4">第4&nbsp;&nbsp;支出（月額）&nbsp;※月単位以外の定期収入は月額に直して記入してください。</td><td></td><td></td><td></td><td></td><td></td><td></td><td></td><td></td><td></td><td></td><td></td><td></td><td></td></tr>
            <tr class="e"><th>30</th><td></td><td></td><td></td><td></td><td></td><td></td><td></td><td></td><td></td><td></td><td></td><td></td><td></td><td></td><td></td><td></td><td></td><td></td></tr>
            <tr><th>31</th><td></td><td></td><td class="bk">内容</td><td class="bk">月額</td><td class="bk">資料番号</td><td class="bk">備考</td><td></td><td></td><td></td><td></td><td></td><td></td><td></td><td></td><td></td><td></td><td></td><td></td></tr>
            <tr><th>32</th><td></td><td></td><td class="bk">施設利用料・入院費</td><td class="bk"></td><td class="bk num">2</td><td class="bk"></td><td></td><td></td><td></td><td></td><td></td><td></td><td></td><td></td><td></td><td></td><td></td><td></td></tr>
            <tr><th>33</th><td></td><td></td><td class="bk">医療費</td><td class="bk"></td><td class="bk num">2</td><td class="bk"></td><td></td><td></td><td></td><td></td><td></td><td></td><td></td><td></td><td></td><td></td><td></td><td></td></tr>
            <tr><th>34</th><td></td><td></td><td class="bk">健康保険料</td><td class="bk"></td><td class="bk num">2</td><td class="bk"></td><td></td><td></td><td></td><td></td><td></td><td></td><td></td><td></td><td></td><td></td><td></td><td></td></tr>
            <tr><th>35</th><td></td><td></td><td class="bk">その他費用</td><td class="bk"></td><td class="bk num">2</td><td class="bk"></td><td></td><td></td><td></td><td></td><td></td><td></td><td></td><td></td><td></td><td></td><td></td><td></td></tr>
            <tr><th>36</th><td></td><td></td><td class="bk">合計</td><td class="bk"></td><td class="bk"></td><td class="bk"></td><td></td><td></td><td></td><td></td><td></td><td></td><td></td><td></td><td></td><td></td><td></td><td></td></tr>
            <tr class="e"><th>37</th><td></td><td></td><td></td><td></td><td></td><td></td><td></td><td></td><td></td><td></td><td></td><td></td><td></td><td></td><td></td><td></td><td></td><td></td></tr>
            <tr><th>38</th><td></td><td colspan="2">第5&nbsp;&nbsp;収入－支出（月額）</td><td></td><td></td><td></td><td></td><td></td><td></td><td></td><td></td><td></td><td></td><td></td><td></td><td></td><td></td><td></td></tr>
            <tr><th>39</th><td></td><td class="bk"></td><td class="bk"></td><td class="bk">=</td><td></td><td>円</td><td></td><td></td><td></td><td></td><td></td><td></td><td></td><td></td><td></td><td></td><td></td><td></td></tr>
            <tr class="e"><th class="hl">40</th><td></td><td></td><td></td><td></td><td class="cur"><span class="selbox"><i></i></span></td><td></td><td></td><td></td><td></td><td></td><td></td><td></td><td></td><td></td><td></td><td></td><td></td><td></td></tr>
            <tr class="e"><th>41</th><td></td><td></td><td></td><td></td><td></td><td></td><td></td><td></td><td></td><td></td><td></td><td></td><td></td><td></td><td></td><td></td><td></td><td></td></tr>
            <tr class="e"><th>42</th><td></td><td></td><td></td><td></td><td></td><td></td><td></td><td></td><td></td><td></td><td></td><td></td><td></td><td></td><td></td><td></td><td></td><td></td></tr>
            <tr class="e"><th>43</th><td></td><td></td><td></td><td></td><td></td><td></td><td></td><td></td><td></td><td></td><td></td><td></td><td></td><td></td><td></td><td></td><td></td><td></td></tr>
            <tr class="e"><th>44</th><td></td><td></td><td></td><td></td><td></td><td></td><td></td><td></td><td></td><td></td><td></td><td></td><td></td><td></td><td></td><td></td><td></td><td></td></tr>
            <tr class="e"><th>45</th><td></td><td></td><td></td><td></td><td></td><td></td><td></td><td></td><td></td><td></td><td></td><td></td><td></td><td></td><td></td><td></td><td></td><td></td></tr>
            <tr class="e"><th>46</th><td></td><td></td><td></td><td></td><td></td><td></td><td></td><td></td><td></td><td></td><td></td><td></td><td></td><td></td><td></td><td></td><td></td><td></td></tr>
            <tr class="e"><th>47</th><td></td><td></td><td></td><td></td><td></td><td></td><td></td><td></td><td></td><td></td><td></td><td></td><td></td><td></td><td></td><td></td><td></td><td></td></tr>
            <tr class="e"><th>48</th><td></td><td></td><td></td><td></td><td></td><td></td><td></td><td></td><td></td><td></td><td></td><td></td><td></td><td></td><td></td><td></td><td></td><td></td></tr>
            <tr class="e"><th>49</th><td></td><td></td><td></td><td></td><td></td><td></td><td></td><td></td><td></td><td></td><td></td><td></td><td></td><td></td><td></td><td></td><td></td><td></td></tr>
            <tr class="e"><th>50</th><td></td><td></td><td></td><td></td><td></td><td></td><td></td><td></td><td></td><td></td><td></td><td></td><td></td><td></td><td></td><td></td><td></td><td></td></tr>
            <tr class="e"><th>51</th><td></td><td></td><td></td><td></td><td></td><td></td><td></td><td></td><td></td><td></td><td></td><td></td><td></td><td></td><td></td><td></td><td></td><td></td></tr>
            <tr class="e"><th>52</th><td></td><td></td><td></td><td></td><td></td><td></td><td></td><td></td><td></td><td></td><td></td><td></td><td></td><td></td><td></td><td></td><td></td><td></td></tr>
          </tbody>
        </table>
        <span class="vs-thumb"></span>
        <span class="vs-arrows"><i></i><i></i></span>
      </div>
      <div class="hscroll"><span class="hs-thumb"></span><span class="hs-arrows"><i></i><i></i></span></div>
      <div class="sh-tabs">
        <span class="st-add">+</span><span class="st-all"></span>
        <span class="st-tab">財産目録<i></i></span>
        <span class="st-tab on">提出用の財産目録<i></i></span>
        <svg class="st-expl" viewBox="0 0 14 22"><path d="M0 0h14v19H9l-2 3-2-3H0z" fill="#5f6368"/><path d="M7 4l2.500 5.500L7 15l-2.500-5.500z" fill="#fff"/></svg>
      </div>
    </div>
    <aside class="sh-side">
      <svg viewBox="0 0 14 18" class="sd-i"><rect width="14" height="18" rx="1" fill="#4285f4"/><rect x="2" y="6" width="10" height="10" fill="#7baaf7"/><text x="7" y="14" text-anchor="middle" class="svgb" font-size="7" fill="#fff">31</text></svg>
      <svg viewBox="0 0 24 24" class="sd-i k"><use href="#keep"/></svg>
      <svg viewBox="0 0 24 24" class="sd-i t"><circle cx="12" cy="12" r="11" fill="#1a73e8"/><path d="M7 12l4 4 6-7" fill="none" stroke="#fff" stroke-width="2.400"/></svg>
      <span class="sd-chev">›</span>
    </aside>
  </div>
  <footer class="taskbar">
    <span class="tk s1"><svg><use href="#win"/></svg></span>
    <span class="tk s2"><svg><use href="#search"/></svg></span>
    <span class="tk s3"><svg><use href="#taskview"/></svg></span>
    <span class="tk on"><svg><use href="#explorer"/></svg></span>
    <span class="tk"><svg><use href="#word"/></svg></span>
    <span class="tk"><svg><use href="#excel"/></svg></span>
    <span class="tk"><svg><use href="#ie"/></svg></span>
    <span class="tk"><svg><use href="#edge"/></svg></span>
    <span class="tk"><svg><use href="#spotify"/></svg></span>
    <span class="tk"><svg><use href="#keep"/></svg></span>
    <span class="tk act"><svg><use href="#chrome"/></svg></span>
    <span class="tk"><svg><use href="#notepad"/></svg></span>
    <span class="tk"><svg><use href="#slack"/></svg></span>
    <span class="tk"><svg><use href="#teal"/></svg></span>
    <div class="tray"><span class="tclock"><span>8:59</span><span>2020/10/31</span></span></div>
  </footer>
</section>
</body>
</html>
```
FILE: styles.css
```css
*{box-sizing:border-box}
html,body{margin:0;padding:0}
body{width:2966px;height:900px;background:#000;display:flex;align-items:flex-start;overflow:hidden;font-family:"Noto Sans","Noto Sans CJK JP",sans-serif;color:#202124}
.defs{display:none}
.svgb{font-family:"Noto Sans",sans-serif;font-weight:700}
.svgi{font-family:"Noto Sans",sans-serif;font-weight:500;font-style:italic}

.window{display:flex;flex-direction:column;background:#fff;overflow:hidden}
.left{width:1366px;height:768px;margin-top:58px;--ext:32.3px}
.right{width:1600px;height:900px;--ext:32.1px}

/* browser chrome */
.tabstrip{height:34px;display:flex;align-items:center;padding-left:8px;background:#dee1e6;flex:none}
.right .tabstrip{background:#e6e9ec;padding-left:7px}
.tab{width:240px;height:34px;padding:0 8px 0 12px;display:flex;align-items:center;font-size:11.500px;color:#45484c;font-feature-settings:"palt"}
.tab.active{background:#fff;border-radius:8px 8px 0 0;color:#3c4043}
.tab.wide{width:241px;padding-left:13px}
.fav{width:16px;height:17px;flex:none;margin-right:8px}
.fav-g{background:#000;color:#fff;font:700 13px/17px "Noto Sans",sans-serif;text-align:center}
.fav-gc{background:#0c0c0c;color:#fff;border-radius:50%;font:700 11px/15px "Noto Sans",sans-serif;text-align:center}
.tab-t{flex:1;min-width:0;white-space:nowrap;overflow:hidden;letter-spacing:-.1px;margin-right:4px}
.tab-x{width:16px;text-align:center;font-size:10px;color:#444;flex:none;font-weight:700}
.newtab{margin-left:12px;width:16px;font-size:24px;line-height:24px;font-weight:300;color:#444;text-align:center}
.winctl{margin-left:auto;display:flex;align-items:center;height:34px}
.left .winctl{margin-right:-4px}
.winctl span{width:46px;display:flex;justify-content:center;align-items:center;height:28px;font-size:12px;color:#333}
.right .winctl span{color:#777}
.min::before{content:"";width:10px;height:1px;background:#333}
.right .min::before{background:#777}
.res::before{content:"";width:9px;height:10px;border:1px solid currentColor;box-shadow:2px -2px 0 -1px #dee1e6,2px -2px 0 0 currentColor}

.toolbar{height:34px;display:flex;align-items:center;padding:0 1px 0 5px;background:#fff;flex:none}
.right .toolbar{padding-right:5px}
.nav{width:32px;height:18px;fill:#5f6368}
.nav.off{fill:#bdc1c6;transform:scaleX(-1)}
.addr{flex:1;height:28px;margin:0 7px 0 7px;background:#f1f3f4;border-radius:14px;display:flex;align-items:center;padding:0 6px 0 13px;min-width:0}
.right .addr{margin-right:6px}
.lock{width:13px;height:13px;fill:#5f6368;flex:none;margin-right:9px}
.url{flex:1;min-width:0;font-size:13.350px;white-space:nowrap;overflow:hidden;color:#5f6368;letter-spacing:-.1px}
.url b{font-weight:400;color:#202124}
.aico{width:16px;height:16px;flex:none;color:#5f6368;fill:#5f6368;margin-left:16px}
.aico:last-child{margin-right:4px}
.ext{width:var(--ext);display:flex;justify-content:center;align-items:center;height:24px;flex:none}
.ex{width:17px;height:17px}
.ex.dark{fill:#5f6368;width:18px;height:18px}
.wheel{width:14px;height:14px;border-radius:50%;background:conic-gradient(#f33,#fc0,#3c3,#3cc,#33f,#c3c,#f33);box-shadow:0 0 0 1px #444 inset}
.gram{width:16px;height:16px;border-radius:50%;background:#15c39a;color:#fff;font:700 11px/16px "Noto Sans",sans-serif;text-align:center}
.gsq{width:16px;height:16px;border-radius:2px;background:#808080;color:#fff;font:700 10px/16px "Noto Sans",sans-serif;text-align:center}
.ava{width:22px;height:22px;border-radius:50%;background:#00897b;color:#fff;font-size:12px;line-height:22px;text-align:center}
.dots{width:3px;height:3px;border-radius:50%;background:#5f6368;box-shadow:0 -5px 0 #5f6368,0 5px 0 #5f6368}

.bookmarks{height:35px;display:flex;align-items:center;padding-left:16px;border-bottom:1px solid #dadce0;flex:none;font-size:12px;color:#3c4043;font-feature-settings:"palt"}
.right .bookmarks{height:34px}
.bm-f{width:12px;height:14px;flex:none}
.bm-t{white-space:nowrap}
.gap1{margin-left:10px}
.bm-i{width:16px;height:16px;flex:none}
.tw{margin-left:15px}
.fbk{margin-left:17px;margin-right:8px}
.oc{margin-left:16px;margin-right:9px}
.dl{margin-left:15px;margin-right:9px}
.bm-other{margin-left:auto;display:flex;align-items:center;gap:11px;border-left:1px solid #dadce0;height:16px;padding-left:11px;padding-right:10px}
.right .bm-other{padding-right:14px}

/* glide */
.app{height:625px;display:flex;flex:none}
.side{width:106px;flex:none;display:flex;flex-direction:column;align-items:center;padding-top:21px;background:#fff;padding-bottom:22px}
.logo{width:35px;height:35px;border-radius:50%;background:#0a2530;color:#fff;font:700 24px/30px "Noto Sans",sans-serif;text-align:center}
.appicon{width:52px;height:53px;margin-top:34px;filter:drop-shadow(0 3px 4px rgba(0,0,0,.15))}
.edits-bar{width:53px;height:3px;background:#ececf1;border-radius:2px;margin-top:18px;display:block}
.edits-bar i{display:block;width:6px;height:3px;background:#55565f;border-radius:2px}
.edits{font-size:10.500px;line-height:14px;color:#66677a;margin-top:8px;font-weight:500}
.srow{width:106px;height:44px;display:flex;align-items:center;justify-content:center;flex:none}
.srow.sel{margin-top:28px;background:#efeff5;position:relative}
.srow.sel::before{content:"";position:absolute;left:0;top:9px;width:3px;height:26px;background:#33343c}
.srow.low{height:40px}
.sic{width:23px;height:23px}
.gearc{fill:#77788a;width:28px;height:28px}
.sdiv{width:53px;height:2px;background:#d9d9e3;margin:9px 0 8px;flex:none}
.mbox{margin-top:auto;width:53px;height:53px;border-radius:11px;background:#008c78;color:#fff;font-size:30px;line-height:53px;text-align:center}

.canvas{flex:1;min-width:0;background:#f3f3f4;display:flex;flex-direction:column;position:relative}
.canvas-top{height:57px;flex:none;display:flex;align-items:flex-start;padding:17px 16px 0 26px}
.cv-u,.cv-r{width:20px;height:20px;margin-top:7px}
.cv-u{fill:#8b8c9c}
.cv-r{fill:#cfcfd8;margin-left:20px}
.upgrade{margin-left:auto;width:80px;height:33px;border-radius:4px;padding:2px;background:linear-gradient(135deg,#4f62ff,#13c27a 70%)}
.upgrade span{display:block;height:100%;background:#f3f3f4;border-radius:2px;color:#4f62ff;font-size:12.500px;line-height:29px;text-align:center}
.share{margin-left:12px;width:77px;height:33px;border-radius:4px;background:#5065ff;color:#fff;font-size:12.500px;line-height:33px;text-align:center}
.phone{align-self:center;width:237px;height:513px;flex:none;background:#000;border-radius:28px;box-shadow:0 10px 30px rgba(0,0,0,.12);position:relative;color:#555;font-size:10.200px;padding:0;overflow:hidden}
.status{height:27px;display:flex;align-items:center;justify-content:space-between;padding:2px 10px 0 18px;color:#fff;font-size:8.500px;font-weight:600}
.st-ico{width:42px;height:12px}
.pnav{height:25px;display:flex;align-items:center;padding:3px 11px 0 10px;color:#ddd}
.ptitle{margin-left:32px;color:#eee}
.padd{margin-left:auto;color:#666}
.field{height:46px;margin:0 19px;border-bottom:1px solid #1c1c1c;padding-top:20px;line-height:14px;white-space:nowrap;overflow:hidden;text-overflow:ellipsis}
.field.first{height:54px;border-bottom:1px solid #aaa;color:#bbb}
.field.datef{height:47px;display:flex;flex-direction:column;justify-content:flex-end;padding:0 0 5px;color:#ccc}
.field small{font-size:8px;color:#666;line-height:12px}
.dval{display:flex;justify-content:space-between;align-items:center;padding:0 3px;line-height:14px;margin-top:3px}
.cal{width:10px;height:12px}
.nob{border:0;height:40px;padding-top:19px}
.home{position:absolute;left:76px;bottom:5px;width:85px;height:3px;border-radius:2px;background:#fff}
.player{position:absolute;left:18px;bottom:14px;display:flex;align-items:center;gap:13px}
.play{width:35px;height:35px;border-radius:50%;background:#dfdfe8;display:flex;align-items:center;justify-content:center}
.play i{width:22px;height:22px;border-radius:50%;background:#2e2f37;display:block;position:relative}
.play i::after{content:"";position:absolute;left:9px;top:6.500px;border-left:6px solid #eee;border-top:4.500px solid transparent;border-bottom:4.500px solid transparent}
.cursor{width:19px;height:19px}

.props{width:396px;flex:none;background:#fff;display:flex;flex-direction:column;position:relative;overflow:hidden}
.props-h{height:65px;flex:none;display:flex;align-items:center;border-bottom:1px solid #dedee6;padding-left:24px}
.chev{font-size:26px;color:#777;font-weight:300;line-height:26px;margin-top:-5px}
.props-h h1{margin:0 0 0 -6px;padding-left:23px;flex:1;text-align:center;font-size:17px;font-weight:600;color:#2c2d33}
.addb{width:35px;height:36px;border-radius:50%;background:#5065ff;color:#fff;font-size:24px;line-height:33px;text-align:center;font-weight:300;margin-right:13px;flex:none}
.cards{padding:10px 19px 0 18px;display:flex;flex-direction:column;gap:13px;overflow:hidden;flex:1}
.card{height:83px;flex:none;border:1px solid #dcdce4;border-radius:4px;background:#fff;display:flex;flex-direction:column}
.c-h{height:36px;flex:none;display:flex;align-items:center;padding-left:10px;border-bottom:1px solid #dcdce4;font-size:13px}
.c-i{width:24px;height:20px;flex:none;margin-right:10px}
.c-n{color:#3a3b44;margin-right:17px;white-space:nowrap;letter-spacing:-.12px}
.c-s{color:#77788a;white-space:nowrap}
.c-b{flex:1;background:#ecedf2;display:flex;align-items:center;border-radius:0 0 4px 4px;padding:0 3px 0 17px}
.c-l{font-size:13px;color:#3a3b44;flex:1}
.c-a{width:15px;height:15px;fill:#77788a;stroke:#77788a;transform:scaleX(-1);margin-right:6px;flex:none}
.sel-box{width:165px;height:35px;background:#fff;border:1px solid #b9b9c5;border-radius:4px;display:flex;align-items:center;padding:0 18px 0 9px}
.sa{width:18px;height:18px;background:#b4b5c4;color:#fff;font-size:12px;font-weight:600;line-height:18px;text-align:center;border-radius:1px}
.sn{font-size:12.500px;color:#333;margin-left:8px}
.sel-box i{margin-left:auto;border-top:5px solid #77788a;border-left:4px solid transparent;border-right:4px solid transparent}
.p-thumb{position:absolute;right:2px;top:251px;width:7px;height:111px;background:#b5b5c5}
.props::after{content:"";position:absolute;right:9px;top:65px;bottom:0;width:1px;background:#e6e6ec}
.help{position:absolute;right:23px;top:560px;width:42px;height:42px;border-radius:50%;background:#2c2d33;color:#fff;font-size:24px;line-height:42px;text-align:center;box-shadow:0 2px 6px rgba(0,0,0,.25);z-index:2}

/* taskbar */
.taskbar{height:40px;background:#1a2533;display:flex;align-items:center;flex:none}
.tk{width:49.200px;height:40px;display:flex;align-items:center;justify-content:center;flex:none;position:relative}
.tk.s1{width:47px}
.tk.s2{width:48px}
.tk.s3{width:50px}
.tk svg{width:23px;height:23px}
.tk.s1 svg{width:18px;height:18px}
.tk.s2 svg,.tk.s3 svg{width:18px;height:19px}
.tk.on::after,.tk.act::after{content:"";position:absolute;left:5px;right:5px;bottom:0;height:2px;background:#76b9ed}
.tk.act{background:#3a4552}
.tk.act::after{left:0;right:0}
.tray{margin-left:auto;display:flex;align-items:center;padding-right:10px;color:#fff}
.right .tray{padding-right:4px}
.tr{width:24px;display:flex;justify-content:center;align-items:center;height:24px}
.tr svg{width:16px;height:15px}
.ime{font-size:14px;gap:1px}
.ime i{width:5px;height:5px;border-left:1px solid #fff;border-bottom:1px solid #fff;margin-top:8px}
.tclock{width:64px;display:flex;flex-direction:column;align-items:center;font-size:11px;line-height:18px;color:#e6e6e6}
.notif{width:46px;display:flex;justify-content:center;position:relative}
.notif svg{width:16px;height:15px;margin-top:-3px;margin-left:-2px}
.notif b{position:absolute;left:23px;top:6px;width:16px;height:16px;border-radius:50%;border:1px solid #888;background:#1a2533;font-size:9px;line-height:14px;text-align:center;color:#eee}

/* sheets */
.sh-head{height:49px;flex:none;display:flex;align-items:flex-start;padding:11px 15px 0 17px;border-bottom:1px solid #dadce0}
.sh-logo{width:20px;height:28px;flex:none}
.sh-titles{margin-left:17px;display:flex;flex-direction:column;margin-top:-2px}
.sh-title{display:flex;align-items:center;height:17px}
.sh-name{font-size:14px;color:#202124;width:71px}
.sh-ti{width:13px;height:13px;fill:#5f6368;margin-right:9.500px}
.sh-menu{display:flex;font-size:11.200px;color:#3c4043;margin-top:4px;line-height:16px;white-space:nowrap}
.sh-menu span{margin-right:11px}
.sh-menu .saved{margin-left:6px;color:#5f6368;text-decoration:underline}
.sh-cmt{margin-left:auto;width:16px;height:16px;margin-top:4px}
.sh-share{margin-left:15px;width:60px;height:27px;background:#188038;border-radius:3px;color:#fff;font-size:11px;display:flex;align-items:center;justify-content:center;gap:6px;margin-top:1px;flex:none}
.sh-share svg{width:9px;height:9px;fill:#fff}
.sh-ava{margin-left:15px;width:24px;height:24px;border-radius:50%;background:#00897b;color:#fff;font-size:12px;line-height:24px;text-align:center;margin-top:3px;flex:none}
.sh-body{height:709px;display:flex;flex:none}
.sh-main{width:1558px;flex:none;display:flex;flex-direction:column;border-right:1px solid #dadce0}
.sh-tools{height:31px;flex:none;display:flex;align-items:center;padding:0 12px 0 22px;border-bottom:1px solid #e0e0e0;font-size:10px;color:#5f6368}
.sp{width:1px;height:18px;background:#dadce0;margin:0 4px;flex:none}
.ti{display:flex;align-items:center;justify-content:center;flex:none;height:20px;font-style:normal;text-decoration:none;white-space:nowrap}
.tic{height:14px;fill:#5f6368;flex:none}
.dd{justify-content:center;gap:5px}
.dd i{border-top:3px solid #5f6368;border-left:2.500px solid transparent;border-right:2.500px solid transparent;flex:none}
.lft{justify-content:space-between;padding:0 5px 0 8px}
.twelve{justify-content:space-between;padding:0 2px 0 8px}
.w14{width:14px}.w18{width:18px}.w20{width:20px}.w21{width:21px}.w22{width:21.500px}.w24{width:24px}.w27{width:27px}.w28{width:28px}.w29{width:29px}.w30{width:30px}.w32{width:32px}.w34{width:34px}.w35{width:35px}.w40{width:40px}.w46{width:46px}.w47{width:47px}.w78{width:78px}
.big{font-size:13px}
.ti.big{font-weight:700}
em.big{font-style:italic}
s.big{text-decoration:line-through}
.acol{box-shadow:inset 0 -3px 0 #000;height:17px;margin:0 4px;width:16px}
.sm{font-size:9px;position:relative}
.sm sub{position:absolute;bottom:-3px;right:2px;font-size:7px}
.faint i{border-top-color:#bbb}
.ti.sig{font-weight:400}
.hira{font-size:14px;color:#333;justify-content:flex-start;padding-left:5px;gap:9px}
.collapse{margin-left:auto;margin-right:2px;width:7px;height:7px;border-left:1.500px solid #5f6368;border-top:1.500px solid #5f6368;transform:rotate(45deg);margin-top:4px}
.sh-fx{height:18px;flex:none;padding-left:11px;border-bottom:1px solid #c4c7c9;display:flex;align-items:center}
.fx{font:italic 12px "Liberation Serif",serif;color:#bbb;width:23px;border-right:1px solid #dadce0;height:14px;line-height:13px}
.grid-wrap{height:621px;flex:none;overflow:hidden;position:relative}
.grid{border-collapse:separate;border-spacing:0;table-layout:fixed;width:1550px;font-size:12px;color:#000}
.c0{width:34px}.c76{width:76px}.c155{width:155px}.c103{width:103px}.c120{width:120px}.c137{width:137px}.c77{width:77px}.c12{width:12px}
.grid td{height:18px;padding:0 3px;border-right:1px solid #e2e3e3;border-bottom:1px solid #e2e3e3;white-space:nowrap;overflow:visible;line-height:14px;vertical-align:middle;font-size:12px;position:relative}
.grid tr.e td,.grid tr.e th{height:16px}
.grid tbody th{height:18px;font-weight:400;font-size:9.500px;color:#666;background:#f8f9fa;border-right:2px solid #c4c7c9;border-bottom:1px solid #d8d9db;padding:0;line-height:10px}
.grid thead th{height:18px;font-weight:400;font-size:9.500px;color:#555;background:#f8f9fa;border-right:1px solid #d0d1d3;border-bottom:2px solid #b8babc;padding:0}
.grid thead th.corner{border-right:3px solid #c4c7c9;background:#f1f2f3}
.grid thead th.freeze{position:relative}
.grid thead th.freeze::after{content:"";position:absolute;right:0;top:0;bottom:0;width:4px;background:#4d8df6}
.grid th.hl{background:#e8eaed}
.grid td.bk{border-bottom:1px solid #000}
.grid td.num{text-align:right}
.selbox{position:absolute;left:0;top:-1px;right:-1px;bottom:-1px;border:1px solid #1a73e8;display:block}
.selbox i{position:absolute;right:-3px;bottom:-3px;width:5px;height:5px;background:#1a73e8}
.vs-thumb{position:absolute;right:1px;top:30px;width:6px;height:25px;background:#dadce0;border-radius:3px}
.vs-arrows{position:absolute;right:0;bottom:3px;width:8px;display:flex;flex-direction:column;border-top:1px solid #dadce0}
.vs-arrows i{height:10px;border-bottom:1px solid #dadce0;display:flex;align-items:center;justify-content:center}
.vs-arrows i::after{content:"";border-bottom:3px solid #999;border-left:2px solid transparent;border-right:2px solid transparent}
.vs-arrows i+i::after{border-bottom:0;border-top:3px solid #999}
.hscroll{height:9px;flex:none;position:relative;border-bottom:1px solid #dadce0;background:#fff}
.hs-thumb{position:absolute;left:36px;top:0;width:1029px;height:7px;background:#dadce0;border-radius:4px}
.hs-arrows{position:absolute;right:10px;top:0;display:flex;width:22px;height:8px;border-left:1px solid #dadce0}
.hs-arrows i{flex:1;display:flex;align-items:center;justify-content:center;border-right:1px solid #dadce0}
.hs-arrows i::after{content:"";border-right:3px solid #999;border-top:2px solid transparent;border-bottom:2px solid transparent}
.hs-arrows i+i::after{border-right:0;border-left:3px solid #999}
.sh-tabs{flex:1;background:#f1f3f4;display:flex;align-items:center;padding-left:36px;min-height:0}
.st-add{font-size:18px;font-weight:400;color:#5f6368;width:10px;text-align:center;line-height:18px}
.st-all{width:9px;height:9px;margin-left:14px;background:repeating-linear-gradient(#5f6368 0 2px,transparent 2px 3px)}
.st-tab{height:30px;width:84px;margin-left:17px;border-left:1px solid #e2e3e4;display:flex;align-items:center;justify-content:center;gap:8px;font-size:11.500px;color:#5f6368}
.st-tab i{border-top:3px solid #5f6368;border-left:2.500px solid transparent;border-right:2.500px solid transparent}
.st-tab.on{margin-left:0;width:128px;background:#fff;color:#188038;font-weight:500;box-shadow:0 1px 2px rgba(0,0,0,.1)}
.st-tab.on i{border-top-color:#188038}
.st-expl{margin-left:auto;width:14px;height:22px;margin-right:17px}
.sh-side{flex:1;display:flex;flex-direction:column;align-items:center;padding-top:13px}
.sd-i{width:14px;height:18px}
.sd-i.k{margin-top:24px}
.sd-i.t{margin-top:24px;height:16px}
.sd-chev{margin-top:auto;margin-bottom:10px;font-size:18px;line-height:18px;color:#5f6368}
```
